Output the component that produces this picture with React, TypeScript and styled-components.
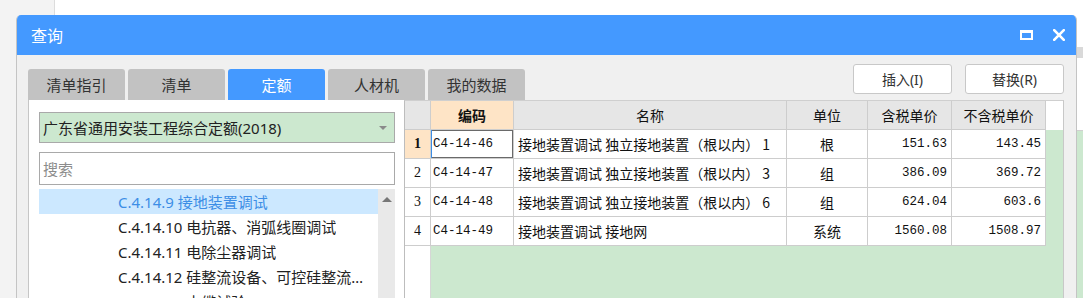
import styled, { createGlobalStyle } from 'styled-components'

const GlobalStyle = createGlobalStyle`
  html, body {
    margin: 0;
    padding: 0;
    width: 1083px;
    height: 298px;
    overflow: hidden;
    background: #ffffff;
    font-family: "Noto Sans", "Noto Sans CJK SC", sans-serif;
  }
  * { box-sizing: border-box; }
`

const Page = styled.div`
  position: relative;
  display: flex;
  width: 1083px;
  height: 298px;
  overflow: hidden;
`

const SideStrip = styled.div`
  width: 55px;
  background: #f3f3f3;
  border-right: 1px solid #dcdcdc;
`

const MainArea = styled.div`
  flex: 1;
  display: flex;
  flex-direction: column;
`

const MainBar = styled.div`
  margin-top: 47px;
  height: 11px;
  background: #d9d9d9;
`

const MainBlank = styled.div`
  height: 73px;
  border-bottom: 1px solid #d0d0d0;
`

const MainGreen = styled.div`
  flex: 1;
  background: #cce8cf;
`

const Dialog = styled.div`
  position: absolute;
  left: 16px;
  top: 15px;
  width: 1061px;
  height: 300px;
  display: flex;
  flex-direction: column;
  background: #f0f0f0;
  border: 1px solid #c4c4c4;
  border-top: none;
  border-radius: 5px 5px 0 0;
  overflow: hidden;
`

const TitleBar = styled.div`
  height: 40px;
  flex-shrink: 0;
  display: flex;
  align-items: center;
  justify-content: space-between;
  padding: 0 11px 0 14px;
  background: #4499ff;
  color: #ffffff;
  font-family: "Noto Sans CJK SC", sans-serif;
  font-size: 16px;
`

const TitleIcons = styled.div`
  display: flex;
  align-items: center;
  gap: 20px;
`

const Body = styled.div`
  flex: 1;
  display: flex;
  flex-direction: column;
  padding: 9px 12px 0 11px;
`

const Toolbar = styled.div`
  height: 36px;
  display: flex;
  justify-content: space-between;
  align-items: flex-end;
`

const TabList = styled.div`
  display: flex;
  gap: 3px;
`

const Tab = styled.div<{ $active?: boolean }>`
  width: 97px;
  height: 31px;
  display: flex;
  align-items: center;
  justify-content: center;
  border-radius: 3px 3px 0 0;
  background: ${(p) => (p.$active ? '#4499ff' : '#c2c2c2')};
  color: ${(p) => (p.$active ? '#ffffff' : '#333333')};
  font-family: "Noto Sans CJK SC", sans-serif;
  font-size: 15px;
`

const ButtonGroup = styled.div`
  align-self: flex-start;
  display: flex;
  gap: 13px;
`

const Button = styled.div`
  width: 99px;
  height: 30px;
  display: flex;
  align-items: center;
  justify-content: center;
  background: #ffffff;
  border: 1px solid #c8c8c8;
  border-radius: 3px;
  color: #333333;
  font-size: 14px;
`

const Content = styled.div`
  flex: 1;
  display: flex;
`

const LeftPanel = styled.div`
  width: 376px;
  display: flex;
  flex-direction: column;
  background: #ffffff;
  border-left: 1px solid #c6c6c6;
  padding: 12px 9px 0 10px;
`

const Select = styled.div`
  position: relative;
  height: 31px;
  display: flex;
  align-items: center;
  padding-left: 3px;
  background: #cce8cf;
  border: 1px solid #a9a9a9;
  color: #222222;
  font-size: 15px;
`

const SelectArrow = styled.span`
  position: absolute;
  right: 7px;
  top: 13px;
  width: 0;
  height: 0;
  border-left: 4px solid transparent;
  border-right: 4px solid transparent;
  border-top: 4px solid #8a8a8a;
`

const Search = styled.div`
  margin-top: 9px;
  height: 33px;
  display: flex;
  align-items: center;
  padding-left: 3px;
  background: #ffffff;
  border: 1px solid #a9a9a9;
  color: #8c8c8c;
  font-size: 15px;
`

const Tree = styled.div`
  flex: 1;
  margin-top: 4px;
  display: flex;
  min-height: 0;
`

const TreeItems = styled.div`
  flex: 1;
  min-width: 0;
`

const TreeItem = styled.div<{ $selected?: boolean }>`
  height: 25px;
  display: flex;
  align-items: center;
  padding: 0 10px 0 79px;
  background: ${(p) => (p.$selected ? '#cce8ff' : 'transparent')};
  color: ${(p) => (p.$selected ? '#3d8ee6' : '#222222')};
  font-size: 15px;
  white-space: nowrap;
  overflow: hidden;
  text-overflow: ellipsis;
  span {
    overflow: hidden;
    text-overflow: ellipsis;
  }
`

const ScrollBar = styled.div`
  width: 17px;
  background: #e9e9e9;
  display: flex;
  justify-content: center;
  padding-top: 8px;
`

const ScrollUp = styled.span`
  width: 0;
  height: 0;
  border-left: 5px solid transparent;
  border-right: 5px solid transparent;
  border-bottom: 5px solid #777777;
`

const TablePanel = styled.div`
  flex: 1;
  display: flex;
  flex-direction: column;
  background: #cce8cf;
  border-left: 1px solid #bdbdbd;
  border-right: 1px solid #c8c8c8;
  border-top: 1px solid #cfcfcf;
`

const columns = '26px 83px 273px 81px 84px 94px 1fr'

const GridRow = styled.div<{ $header?: boolean }>`
  display: grid;
  grid-template-columns: ${columns};
  height: 29px;
  flex-shrink: 0;
`

type Align = 'left' | 'center' | 'right'

const Cell = styled.div<{
  $align?: Align
  $bg?: string
  $bold?: boolean
  $mono?: boolean
  $serif?: boolean
  $focus?: boolean
  $plain?: boolean
}>`
  display: flex;
  align-items: center;
  justify-content: ${(p) =>
    p.$align === 'right' ? 'flex-end' : p.$align === 'center' ? 'center' : 'flex-start'};
  padding: 0 4px 0 ${(p) => (p.$mono ? '2px' : '4px')};
  background: ${(p) => p.$bg ?? '#ffffff'};
  border-right: ${(p) => (p.$plain ? 'none' : '1px solid #cdcdcd')};
  border-bottom: ${(p) => (p.$plain ? 'none' : '1px solid #cdcdcd')};
  box-shadow: ${(p) => (p.$focus ? 'inset 1px 0 0 #3b8de6, inset 0 0 0 1px #6a6a6a' : 'none')};
  color: #111111;
  font-family: ${(p) =>
    p.$mono
      ? '"Liberation Mono", monospace'
      : p.$serif
        ? '"Liberation Serif", serif'
        : '"Noto Sans CJK SC", sans-serif'};
  font-size: ${(p) => (p.$mono ? '12.5px' : '14px')};
  font-weight: ${(p) => (p.$bold ? 700 : 400)};
  white-space: nowrap;
  overflow: hidden;
`

const Filler = styled.div`
  flex: 1;
  display: flex;
`

const RowHeadFill = styled.div`
  width: 26px;
  background: #ffffff;
  border-right: 1px solid #d6d6d6;
`

const HEADER_BG = '#e6e6e6'
const PEACH = '#fee4c6'

const rows = [
  { no: 1, code: 'C4-14-46', name: '接地装置调试 独立接地装置（根以内） 1', unit: '根', tax: '151.63', noTax: '143.45' },
  { no: 2, code: 'C4-14-47', name: '接地装置调试 独立接地装置（根以内） 3', unit: '组', tax: '386.09', noTax: '369.72' },
  { no: 3, code: 'C4-14-48', name: '接地装置调试 独立接地装置（根以内） 6', unit: '组', tax: '624.04', noTax: '603.6' },
  { no: 4, code: 'C4-14-49', name: '接地装置调试 接地网', unit: '系统', tax: '1560.08', noTax: '1508.97' },
]

const treeItems = [
  'C.4.14.9 接地装置调试',
  'C.4.14.10 电抗器、消弧线圈调试',
  'C.4.14.11 电除尘器调试',
  'C.4.14.12 硅整流设备、可控硅整流装置调试',
  'C.4.14.13 电缆试验',
]

const tabs = ['清单指引', '清单', '定额', '人材机', '我的数据']

function MaxIcon() {
  return (
    <svg width="13" height="10" viewBox="0 0 13 10">
      <rect x="1" y="1.5" width="11" height="7.5" fill="none" stroke="#fff" strokeWidth="2" />
      <rect x="0" y="0" width="13" height="3" fill="#fff" />
    </svg>
  )
}

function CloseIcon() {
  return (
    <svg width="12" height="12" viewBox="0 0 12 12">
      <path d="M1.2 1.2 L10.8 10.8 M10.8 1.2 L1.2 10.8" stroke="#fff" strokeWidth="2.6" strokeLinecap="square" />
    </svg>
  )
}

export default function App() {
  return (
    <Page>
      <GlobalStyle />
      <SideStrip />
      <MainArea>
        <MainBar />
        <MainBlank />
        <MainGreen />
      </MainArea>

      <Dialog>
        <TitleBar>
          <span>查询</span>
          <TitleIcons>
            <MaxIcon />
            <CloseIcon />
          </TitleIcons>
        </TitleBar>

        <Body>
          <Toolbar>
            <TabList>
              {tabs.map((t) => (
                <Tab key={t} $active={t === '定额'}>
                  {t}
                </Tab>
              ))}
            </TabList>
            <ButtonGroup>
              <Button>插入(I)</Button>
              <Button>替换(R)</Button>
            </ButtonGroup>
          </Toolbar>

          <Content>
            <LeftPanel>
              <Select>
                广东省通用安装工程综合定额(2018)
                <SelectArrow />
              </Select>
              <Search>搜索</Search>
              <Tree>
                <TreeItems>
                  {treeItems.map((item, i) => (
                    <TreeItem key={item} $selected={i === 0}>
                      <span>{item}</span>
                    </TreeItem>
                  ))}
                </TreeItems>
                <ScrollBar>
                  <ScrollUp />
                </ScrollBar>
              </Tree>
            </LeftPanel>

            <TablePanel>
              <GridRow $header>
                <Cell $bg={HEADER_BG} />
                <Cell $bg={PEACH} $align="center" $bold>
                  编码
                </Cell>
                <Cell $bg={HEADER_BG} $align="center">
                  名称
                </Cell>
                <Cell $bg={HEADER_BG} $align="center">
                  单位
                </Cell>
                <Cell $bg={HEADER_BG} $align="center">
                  含税单价
                </Cell>
                <Cell $bg={HEADER_BG} $align="center">
                  不含税单价
                </Cell>
                <Cell $plain />
              </GridRow>
              {rows.map((r) => (
                <GridRow key={r.no}>
                  <Cell $align="center" $serif $bg={r.no === 1 ? PEACH : undefined} $bold={r.no === 1}>
                    {r.no}
                  </Cell>
                  <Cell $mono $focus={r.no === 1}>
                    {r.code}
                  </Cell>
                  <Cell>{r.name}</Cell>
                  <Cell $align="center">{r.unit}</Cell>
                  <Cell $align="right" $mono>
                    {r.tax}
                  </Cell>
                  <Cell $align="right" $mono>
                    {r.noTax}
                  </Cell>
                  <Cell $plain $bg="transparent" />
                </GridRow>
              ))}
              <Filler>
                <RowHeadFill />
              </Filler>
            </TablePanel>
          </Content>
        </Body>
      </Dialog>
    </Page>
  )
}
